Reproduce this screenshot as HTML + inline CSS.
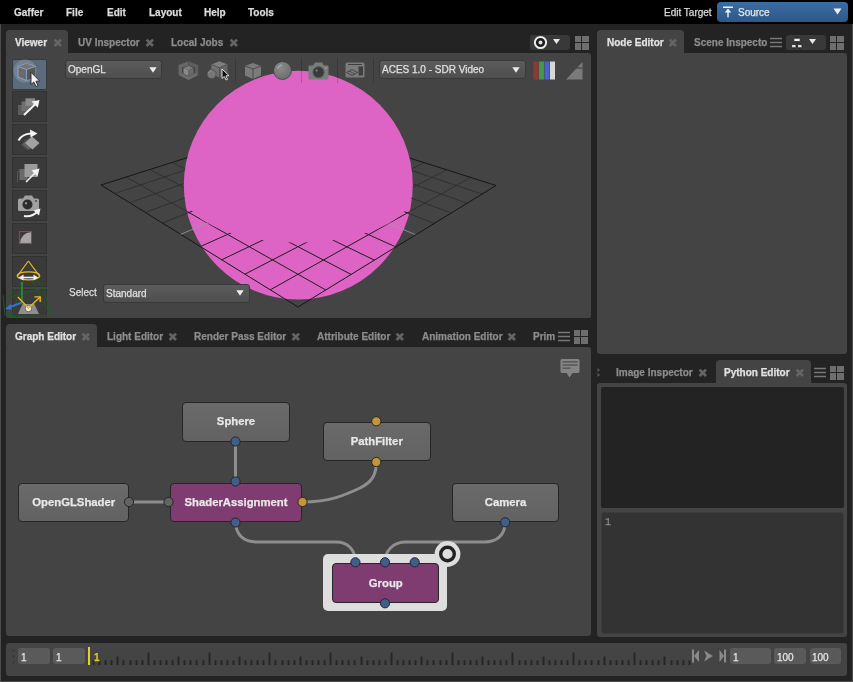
<!DOCTYPE html><html><head><meta charset="utf-8"><style>
*{margin:0;padding:0;box-sizing:border-box}
html,body{width:853px;height:682px;overflow:hidden;background:#232323;font-family:"Liberation Sans",sans-serif;}
.abs{position:absolute}
.t{position:absolute;white-space:nowrap;font-size:10px;line-height:12px;will-change:transform;-webkit-text-stroke:0.25px currentColor}
.b{font-weight:bold}
.menu{color:#dcdcdc;font-weight:bold}
.panel{position:absolute;background:#444444;border-radius:3px}
.tab{position:absolute;background:#444444;border-radius:4px 4px 0 0}
.tabt{color:#8c8c8c;font-weight:bold}
.act{color:#e2e2e2}
.dd{position:absolute;border-radius:3px;background:linear-gradient(#5c5c5c,#4e4e4e);border:1px solid #393939}
.btn{position:absolute;background:#383838;border:1px solid #2e2e2e;border-radius:2px}
.fld{position:absolute;background:#5a5a5a;border-radius:3px}
.node{position:absolute;border:1px solid #262626;border-radius:4px;color:#e8e8e8;font-weight:bold;font-size:11.3px;text-align:center}
</style></head><body>
<div class="abs" style="left:0;top:0;width:853px;height:682px;background:#232323"></div>
<div class="abs" style="left:0;top:24px;width:1.2px;height:658px;background:#4c4c4c"></div>
<div class="abs" style="left:851.7px;top:24px;width:1.3px;height:658px;background:#4c4c4c"></div>
<div class="abs" style="left:0;top:680.6px;width:853px;height:1.4px;background:#4c4c4c"></div>
<div class="abs" style="left:0;top:0;width:853px;height:24px;background:#000"></div>
<div class="t menu" style="left:14px;top:7px">Gaffer</div>
<div class="t menu" style="left:66px;top:7px">File</div>
<div class="t menu" style="left:106.5px;top:7px">Edit</div>
<div class="t menu" style="left:148.5px;top:7px">Layout</div>
<div class="t menu" style="left:204px;top:7px">Help</div>
<div class="t menu" style="left:248px;top:7px">Tools</div>
<div class="t" style="left:664px;top:7px;color:#dcdcdc">Edit Target</div>
<div class="abs" style="left:717px;top:2px;width:131px;height:20px;border-radius:4px;background:linear-gradient(#3b6ca2,#2c5889)"></div>
<svg class="abs" style="left:721.5px;top:5px" width="12" height="13" viewBox="0 0 12 13"><rect x="1" y="1.5" width="10" height="1.5" fill="#f2f2f2"/><path d="M6 3.4 L9.2 7.4 H2.8Z" fill="#f2f2f2"/><rect x="5.3" y="7" width="1.4" height="5.3" fill="#f2f2f2"/></svg>
<div class="t" style="left:738px;top:7px;color:#e6e6e6">Source</div>
<svg class="abs" style="left:833px;top:8px" width="9" height="7"><path d="M0.5 0.5H8.5L4.5 6.5Z" fill="#f0f0f0"/></svg>
<div class="tab" style="left:6px;top:30px;width:62px;height:24px"></div>
<div class="t tabt act" style="left:15px;top:37px">Viewer</div><svg class="abs" style="left:52.7px;top:37.7px" width="10" height="10" viewBox="0 0 10 10"><path d="M1.6 1.6L8 8M8 1.6L1.6 8" stroke="#656565" stroke-width="2.7"/></svg>
<div class="t tabt" style="left:78px;top:37px">UV Inspector</div><svg class="abs" style="left:145.2px;top:37.7px" width="10" height="10" viewBox="0 0 10 10"><path d="M1.6 1.6L8 8M8 1.6L1.6 8" stroke="#656565" stroke-width="2.7"/></svg>
<div class="t tabt" style="left:171px;top:37px">Local Jobs</div><svg class="abs" style="left:228.7px;top:37.7px" width="10" height="10" viewBox="0 0 10 10"><path d="M1.6 1.6L8 8M8 1.6L1.6 8" stroke="#656565" stroke-width="2.7"/></svg>
<div class="abs" style="left:530px;top:35px;width:40px;height:15px;background:#393939;border-radius:3px"></div>
<svg class="abs" style="left:533px;top:35px" width="15" height="15"><circle cx="7.5" cy="7.5" r="6" fill="#1c1c1c"/><circle cx="7.5" cy="7.5" r="5.6" stroke="#ececec" stroke-width="2" fill="none"/><circle cx="7.5" cy="7.5" r="2" fill="#e0e0e0"/></svg>
<svg class="abs" style="left:552.5px;top:39px" width="7" height="5"><path d="M0 0H7L3.5 5Z" fill="#e8e8e8"/></svg>
<svg class="abs" style="left:575px;top:36px" width="14" height="14" viewBox="0 0 14 14"><rect x="0" y="0" width="6" height="6" fill="#6e6e6e"/><rect x="7" y="0" width="7" height="6" fill="#6e6e6e"/><rect x="0" y="7" width="6" height="7" fill="#6e6e6e"/><rect x="7" y="7" width="7" height="7" fill="#6e6e6e"/></svg>
<div class="panel" style="left:6px;top:53px;width:585px;height:264.6px;border-radius:3px 3px 2px 2px"></div>
<svg class="abs" style="left:0;top:0" width="853" height="682"><defs><clipPath id="below"><rect x="0" y="0" width="853" height="682"/></clipPath></defs><line x1="101.00" y1="185.00" x2="298.00" y2="122.50" stroke="#161616" stroke-width="1.0"/><line x1="101.00" y1="185.00" x2="298.00" y2="307.00" stroke="#161616" stroke-width="1.0"/><line x1="114.81" y1="193.55" x2="313.34" y2="127.38" stroke="#2c2c2c" stroke-width="0.8"/><line x1="126.14" y1="177.02" x2="325.74" y2="289.98" stroke="#2c2c2c" stroke-width="0.8"/><line x1="129.57" y1="202.69" x2="329.47" y2="132.51" stroke="#2c2c2c" stroke-width="0.8"/><line x1="149.78" y1="169.52" x2="351.12" y2="274.41" stroke="#2c2c2c" stroke-width="0.8"/><line x1="145.38" y1="212.48" x2="346.44" y2="137.91" stroke="#2c2c2c" stroke-width="0.8"/><line x1="172.06" y1="162.46" x2="374.41" y2="260.11" stroke="#2c2c2c" stroke-width="0.8"/><line x1="162.36" y1="223.00" x2="364.34" y2="143.61" stroke="#2c2c2c" stroke-width="0.8"/><line x1="193.08" y1="155.79" x2="395.88" y2="246.94" stroke="#2c2c2c" stroke-width="0.8"/><line x1="180.63" y1="234.32" x2="383.23" y2="149.62" stroke="#9a9a9a" stroke-width="0.8"/><line x1="212.96" y1="149.48" x2="415.72" y2="234.76" stroke="#9a9a9a" stroke-width="0.8"/><line x1="200.37" y1="246.54" x2="403.20" y2="155.97" stroke="#2c2c2c" stroke-width="0.8"/><line x1="231.77" y1="143.51" x2="434.12" y2="223.47" stroke="#2c2c2c" stroke-width="0.8"/><line x1="221.74" y1="259.77" x2="424.35" y2="162.70" stroke="#2c2c2c" stroke-width="0.8"/><line x1="249.62" y1="137.85" x2="451.22" y2="212.98" stroke="#2c2c2c" stroke-width="0.8"/><line x1="244.96" y1="274.15" x2="446.78" y2="169.84" stroke="#2c2c2c" stroke-width="0.8"/><line x1="266.56" y1="132.47" x2="467.16" y2="203.20" stroke="#2c2c2c" stroke-width="0.8"/><line x1="270.28" y1="289.83" x2="470.62" y2="177.43" stroke="#2c2c2c" stroke-width="0.8"/><line x1="282.67" y1="127.36" x2="482.05" y2="194.06" stroke="#2c2c2c" stroke-width="0.8"/><line x1="298.00" y1="307.00" x2="496.00" y2="185.50" stroke="#161616" stroke-width="1.0"/><line x1="298.00" y1="122.50" x2="496.00" y2="185.50" stroke="#161616" stroke-width="1.0"/><ellipse cx="298.3" cy="185.1" rx="114.5" ry="114.3" fill="#dd64c4"/><mask id="front" maskUnits="userSpaceOnUse" x="0" y="0" width="853" height="682"><rect x="0" y="196" width="600" height="150" fill="#fff"/><path d="M388.69 223.39 L394.97 219.49 L400.25 215.40 L404.52 211.17 L407.79 206.86 L410.07 202.50 L411.38 198.13 L411.76 193.80 L411.24 189.55 L409.88 185.39 L407.72 181.36 L404.82 177.49 L401.23 173.78 L396.99 170.27 L392.18 166.95 L386.83 163.86 L381.00 160.98 L374.74 158.34 L368.10 155.94 L361.12 153.78 L353.85 151.87 L346.32 150.21 L338.59 148.80 L330.67 147.65 L322.62 146.75 L314.47 146.10 L306.25 145.71 L298.00 145.58 L289.75 145.70 L281.54 146.08 L273.39 146.71 L265.35 147.60 L257.46 148.74 L249.73 150.13 L242.23 151.78 L234.98 153.68 L228.02 155.82 L221.41 158.20 L215.17 160.83 L209.37 163.68 L204.05 166.76 L199.26 170.05 L195.05 173.55 L191.47 177.24 L188.58 181.10 L186.44 185.11 L185.08 189.25 L184.57 193.49 L184.95 197.81 L186.25 202.16 L188.52 206.52 L191.77 210.83 L196.02 215.06 L201.27 219.16 L207.52 223.08 L214.72 226.76 L222.84 230.16 L231.82 233.23 L241.57 235.93 L251.99 238.20 L262.98 240.01 L274.40 241.34 L286.12 242.15 L298.00 242.44 L309.88 242.20 L321.61 241.43 L333.05 240.15 L344.06 238.38 L354.52 236.14 L364.29 233.48 L373.30 230.44 L381.46 227.06 L388.69 223.39Z" fill="#000"/></mask><clipPath id="sil"><ellipse cx="298.3" cy="185.1" rx="114.5" ry="114.3"/></clipPath><g clip-path="url(#sil)"><g mask="url(#front)"><line x1="101.00" y1="185.00" x2="298.00" y2="122.50" stroke="#161616" stroke-width="1.0"/><line x1="101.00" y1="185.00" x2="298.00" y2="307.00" stroke="#161616" stroke-width="1.0"/><line x1="114.81" y1="193.55" x2="313.34" y2="127.38" stroke="#1e1e1e" stroke-width="1.0"/><line x1="126.14" y1="177.02" x2="325.74" y2="289.98" stroke="#1e1e1e" stroke-width="1.0"/><line x1="129.57" y1="202.69" x2="329.47" y2="132.51" stroke="#1e1e1e" stroke-width="1.0"/><line x1="149.78" y1="169.52" x2="351.12" y2="274.41" stroke="#1e1e1e" stroke-width="1.0"/><line x1="145.38" y1="212.48" x2="346.44" y2="137.91" stroke="#1e1e1e" stroke-width="1.0"/><line x1="172.06" y1="162.46" x2="374.41" y2="260.11" stroke="#1e1e1e" stroke-width="1.0"/><line x1="162.36" y1="223.00" x2="364.34" y2="143.61" stroke="#1e1e1e" stroke-width="1.0"/><line x1="193.08" y1="155.79" x2="395.88" y2="246.94" stroke="#1e1e1e" stroke-width="1.0"/><line x1="180.63" y1="234.32" x2="383.23" y2="149.62" stroke="#9a9a9a" stroke-width="1.0"/><line x1="212.96" y1="149.48" x2="415.72" y2="234.76" stroke="#9a9a9a" stroke-width="1.0"/><line x1="200.37" y1="246.54" x2="403.20" y2="155.97" stroke="#1e1e1e" stroke-width="1.0"/><line x1="231.77" y1="143.51" x2="434.12" y2="223.47" stroke="#1e1e1e" stroke-width="1.0"/><line x1="221.74" y1="259.77" x2="424.35" y2="162.70" stroke="#1e1e1e" stroke-width="1.0"/><line x1="249.62" y1="137.85" x2="451.22" y2="212.98" stroke="#1e1e1e" stroke-width="1.0"/><line x1="244.96" y1="274.15" x2="446.78" y2="169.84" stroke="#1e1e1e" stroke-width="1.0"/><line x1="266.56" y1="132.47" x2="467.16" y2="203.20" stroke="#1e1e1e" stroke-width="1.0"/><line x1="270.28" y1="289.83" x2="470.62" y2="177.43" stroke="#1e1e1e" stroke-width="1.0"/><line x1="282.67" y1="127.36" x2="482.05" y2="194.06" stroke="#1e1e1e" stroke-width="1.0"/><line x1="298.00" y1="307.00" x2="496.00" y2="185.50" stroke="#161616" stroke-width="1.0"/><line x1="298.00" y1="122.50" x2="496.00" y2="185.50" stroke="#161616" stroke-width="1.0"/></g></g></svg>
<div class="dd" style="left:65px;top:60px;width:97px;height:19px"></div>
<div class="t" style="left:68px;top:64px;color:#e0e0e0">OpenGL</div>
<svg class="abs" style="left:148.5px;top:66.5px" width="8" height="6"><path d="M0.3 0.3H7.7L4 5.8Z" fill="#ececec"/></svg>
<div class="dd" style="left:379px;top:60px;width:147px;height:19px"></div>
<div class="t" style="left:382px;top:64px;color:#e0e0e0">ACES 1.0 - SDR Video</div>
<svg class="abs" style="left:512px;top:67px" width="8" height="6"><path d="M0.3 0.3H7.7L4 5.8Z" fill="#ececec"/></svg>
<div class="abs" style="left:235px;top:58px;width:1px;height:24.5px;background:rgba(0,0,0,0.16)"></div>
<div class="abs" style="left:300.5px;top:58px;width:1px;height:24.5px;background:rgba(0,0,0,0.16)"></div>
<div class="abs" style="left:336.5px;top:58px;width:1px;height:24.5px;background:rgba(0,0,0,0.16)"></div>
<div class="abs" style="left:372.5px;top:58px;width:1px;height:24.5px;background:rgba(0,0,0,0.16)"></div>
<svg class="abs" style="left:178px;top:61px" width="22" height="20" viewBox="0 0 22 20">
<path d="M10.5 0.5 L20.3 4 V14 L10.5 19 L0.7 14 V4 Z M10.5 4.2 L4 6.6 V12.2 L10.5 15.6 L17 12.2 V6.6Z" fill="#5e5e5e" fill-rule="evenodd"/>
<path d="M0.7 4 L10.5 0.5 V4.2 L4 6.6 V12.2 L0.7 14Z" fill="#666"/>
<path d="M0.7 14 L4 12.2 L10.5 15.6 L17 12.2 L20.3 14 L10.5 19Z" fill="#6c6c6c"/>
<path d="M10.5 0.5V4.2" stroke="#4a4a4a" stroke-width="0.8"/>
<path d="M10.5 4.8 L15.5 7 L10.5 9.2 L5.5 7Z" fill="#7c7c7c"/>
<path d="M5.5 7 L10.5 9.2 V15 L5.5 12.5Z" fill="#8a8a8a"/>
<path d="M10.5 9.2 L15.5 7 V12.5 L10.5 15Z" fill="#6a6a6a"/>
</svg>
<svg class="abs" style="left:206px;top:61px" width="24" height="20" viewBox="0 0 24 20">
<path d="M13.4 0.3 L21.5 3.5 L13.4 6.8 L5.3 3.5Z" fill="#7e7e7e"/>
<path d="M5.3 3.5 L13.4 6.8 V16.4 L5.3 13.1Z" fill="#727272"/>
<path d="M13.4 6.8 L21.5 3.5 V13.1 L13.4 16.4Z" fill="#666"/>
<path d="M5.3 3.5 L13.4 6.8 L21.5 3.5 M13.4 6.8 V16.4" stroke="#4c4c4c" stroke-width="0.8" fill="none"/>
<circle cx="5.6" cy="13.2" r="4.6" fill="#777" stroke="#444" stroke-width="0.8"/>
<path d="M2.6 12 Q3.2 9.6 5.6 9.2" stroke="#999" stroke-width="0.8" fill="none"/>
</svg>
<svg class="abs" style="left:221px;top:68px" width="9" height="13" viewBox="0 0 9 13"><path d="M1 1 V10.5 L3.3 8.5 L5 12 L6.5 11.3 L4.9 7.9 L8 7.7Z" fill="#111" stroke="#eee" stroke-width="0.9"/></svg>
<svg class="abs" style="left:244px;top:62px" width="18" height="18" viewBox="0 0 18 18">
<path d="M9 1 L17 4 V13.5 L9 17 L1 13.5 V4Z" fill="#7b7b7b"/>
<path d="M1 4 L9 7 L17 4 M9 7V17" stroke="#4a4a4a" stroke-width="1" fill="none"/>
</svg>
<svg class="abs" style="left:273px;top:61px" width="19" height="19" viewBox="0 0 19 19">
<defs><radialGradient id="sg" cx="0.4" cy="0.35" r="0.7"><stop offset="0" stop-color="#8a8a8a"/><stop offset="1" stop-color="#6c6c6c"/></radialGradient></defs>
<circle cx="9.5" cy="9.5" r="9" fill="url(#sg)" stroke="#3d3d3d" stroke-width="0.8"/>
<path d="M4.5 8 Q5.5 4.5 9 3.8" stroke="#a8a8a8" stroke-width="1.2" fill="none"/>
</svg>
<svg class="abs" style="left:307px;top:62px" width="23" height="18" viewBox="0 0 23 18">
<path d="M1.5 4.5 Q1.5 3.5 2.5 3.5 H6 L8 0.5 H15 L17 3.5 H20.5 Q21.5 3.5 21.5 4.5 V16.5 Q21.5 17.5 20.5 17.5 H2.5 Q1.5 17.5 1.5 16.5Z" fill="#7b7b7b"/>
<circle cx="11.5" cy="10.2" r="5.6" fill="#3a3a3a" stroke="#5a5a5a" stroke-width="0.8"/>
<circle cx="9.6" cy="8.4" r="1" fill="#8a8a8a"/>
<circle cx="18.8" cy="6.2" r="0.9" fill="#a0a0a0"/>
</svg>
<svg class="abs" style="left:345px;top:62px" width="20" height="16" viewBox="0 0 20 16">
<rect x="0.5" y="0.5" width="19" height="15" rx="1.5" fill="#7b7b7b"/>
<path d="M3 2.5 H17" stroke="#3e3e3e" stroke-width="1"/>
<path d="M1.5 10.5 L7 7.5 L12.5 10.5 L7 13.5Z" fill="none" stroke="#3e3e3e" stroke-width="0.9"/>
<path d="M4.2 9 L9.7 12" stroke="#3e3e3e" stroke-width="0.8"/>
<rect x="13.5" y="4.5" width="4.5" height="9" fill="#3e3e3e"/>
</svg>
<svg class="abs" style="left:533px;top:61px" width="24" height="19"><rect x="0.5" y="0.5" width="5" height="18" fill="#8c3a37"/><rect x="6" y="0.5" width="5" height="18" fill="#3e9a46"/><rect x="11.5" y="0.5" width="5" height="18" fill="#4b63c6"/><rect x="17" y="0.5" width="5" height="18" fill="#d6d6d6"/></svg>
<svg class="abs" style="left:566px;top:62px" width="17" height="18"><path d="M0 17.5 L16.5 17.5 L16.5 0Z" fill="#7a7a7a"/><path d="M10 6 L16.5 6" stroke="#444" stroke-width="1.2"/></svg>
<div class="t" style="left:68.5px;top:287px;color:#dedede">Select</div>
<div class="dd" style="left:103px;top:284px;width:147px;height:19px"></div>
<div class="t" style="left:106px;top:288px;color:#e0e0e0">Standard</div>
<svg class="abs" style="left:235.5px;top:290px" width="8" height="6"><path d="M0.3 0.3H7.7L4 5.8Z" fill="#ececec"/></svg>
<div class="abs" style="left:11.5px;top:58.5px;width:35px;height:31px;background:#5b6b7b;border:1px solid #353a40;border-radius:2px"></div>
<div class="abs" style="left:11.5px;top:91px;width:35.5px;height:31px;background:#3a3a3a;border:1px solid #323232"></div>
<div class="abs" style="left:11.5px;top:124px;width:35.5px;height:31px;background:#3a3a3a;border:1px solid #323232"></div>
<div class="abs" style="left:11.5px;top:157px;width:35.5px;height:31px;background:#3a3a3a;border:1px solid #323232"></div>
<div class="abs" style="left:11.5px;top:190px;width:35.5px;height:31px;background:#3a3a3a;border:1px solid #323232"></div>
<div class="abs" style="left:11.5px;top:223px;width:35.5px;height:31px;background:#3a3a3a;border:1px solid #323232"></div>
<div class="abs" style="left:11.5px;top:256px;width:35.5px;height:31px;background:#3a3a3a;border:1px solid #323232"></div>
<div class="abs" style="left:12px;top:289px;width:35px;height:28px;background:#3a3a3a;border:1px solid #333;border-bottom:none"></div>
<svg class="abs" style="left:12px;top:59px" width="34" height="30" viewBox="0 0 34 30">
<circle cx="13" cy="12" r="11.5" fill="#8795a3" opacity="0.55"/>
<path d="M6 7.5 L14.5 4.5 L23.5 7.5 V18 L14.5 21.5 L6 18Z" fill="#6e6868" stroke="#7fa8d8" stroke-width="1"/>
<path d="M14.5 10.5 L23.5 7.5 V18 L14.5 21.5Z" fill="#585555"/>
<path d="M6.5 7.7 L14.5 4.8 L23 7.7 L14.5 10.3Z" fill="#7a7272"/>
<path d="M6 7.5 L14.5 10.5 L23.5 7.5 M14.5 10.5 V21.5" stroke="#7fa8d8" stroke-width="0.9" fill="none"/>
<path d="M19 13.3 V25.5 L21.8 23 L24 27.5 L26 26.6 L23.9 22.3 L27.7 22Z" fill="#f4f4f4" stroke="#222" stroke-width="0.9"/>
</svg>
<svg class="abs" style="left:12px;top:91px" width="35" height="31" viewBox="0 0 35 31">
<rect x="6" y="14" width="8" height="10" fill="#5c5c5c"/>
<rect x="9.5" y="10.5" width="9" height="9.5" fill="#707070"/>
<rect x="13.5" y="7.3" width="9.5" height="7.5" fill="#8a8a8a"/>
<path d="M12 24 L25.5 11" stroke="#f4f4f4" stroke-width="2"/>
<path d="M27.5 9 L19.5 10.5 L25.8 16.8Z" fill="#f4f4f4"/>
</svg>
<svg class="abs" style="left:12px;top:124px" width="35" height="31" viewBox="0 0 35 31">
<path d="M9 21 L14 15 L20 20 L15 26Z" fill="#505050"/>
<path d="M11 20.5 L17 14 L23 19.5 L17 26Z" fill="#636363"/>
<path d="M13 19 L20 12.5 L27.5 19 L20.5 25.5Z" fill="#a2a2a2"/>
<path d="M6.5 16.5 Q10 10 19 9.5" stroke="#f4f4f4" stroke-width="2" fill="none"/>
<path d="M18 5.5 L25.5 9.5 L18.5 13.5Z" fill="#f4f4f4"/>
</svg>
<svg class="abs" style="left:12px;top:157px" width="35" height="31" viewBox="0 0 35 31">
<path d="M5.5 25 V14.5 H9" stroke="#555" stroke-width="1" fill="none"/>
<rect x="7.5" y="12" width="8" height="11" fill="#6a6a6a"/>
<rect x="12.5" y="7" width="13" height="13" fill="#9c9c9c"/>
<path d="M14 25 L25 14" stroke="#f4f4f4" stroke-width="1.6"/>
<path d="M27.5 11.5 L19.5 13.5 L25.5 19.5Z" fill="#f4f4f4"/>
</svg>
<svg class="abs" style="left:12px;top:190px" width="35" height="31" viewBox="0 0 35 31">
<path d="M6 10 Q6 8.5 7.5 8.5 H11 L13 5.5 H20 L22 8.5 H25.5 Q27 8.5 27 10 V19.5 Q27 21 25.5 21 H7.5 Q6 21 6 19.5Z" fill="#a0a0a0"/>
<circle cx="15.5" cy="14.5" r="5" fill="#2c2c2c"/>
<circle cx="14" cy="13.3" r="1.1" fill="#aaa"/>
<circle cx="24" cy="11" r="0.9" fill="#444"/>
<path d="M12 26 Q20 27.5 25.5 21.5" stroke="#f4f4f4" stroke-width="2" fill="none"/>
<path d="M28.5 18.5 L21.5 20.5 L27 25.5Z" fill="#f4f4f4"/>
</svg>
<svg class="abs" style="left:12px;top:223px" width="35" height="31" viewBox="0 0 35 31">
<path d="M8 20.5 Q8.5 10 19.5 9 V20.5Z" fill="#a6a6a6"/>
<rect x="7.5" y="8.5" width="12" height="12" fill="none" stroke="#c13232" stroke-width="1.1"/>
</svg>
<svg class="abs" style="left:0px;top:255px" width="60" height="64" viewBox="0 0 60 64">
<g stroke="#1d5e22" stroke-width="0.9" fill="none">
<path d="M22.6 26 L7.5 43 L8 61.5 L50.7 60.5 L43.7 33 L36 25"/>
<path d="M31.4 25.4 L50.7 60.5 M9.7 42 L43.7 33 M22.6 26 L12 61"/>
<path d="M3 40 L5 61"/>
</g>
<path d="M22 27 V47" stroke="#2f8f35" stroke-width="1.6"/>
<path d="M22 47.5 L10 52" stroke="#3d6ec8" stroke-width="2.2"/>
<path d="M5 54 L10.5 49 L12 54.5Z" fill="#3d6ec8"/>
<path d="M22.6 48.9 H34.3 L39 58.9 H17.9Z" fill="#8e8e8e"/>
<circle cx="28.4" cy="53.6" r="3.2" fill="#e8e8e8" stroke="#555" stroke-width="0.8"/>
<path d="M17.9 41.9 L28.4 53 L40.2 41.9" stroke="#e8b820" stroke-width="1.4" fill="none"/>
<path d="M34.3 41.9 H40.2 V47" stroke="#e8b820" stroke-width="1.4" fill="none"/>
<path d="M28.4 6 L17.5 20.8 M28.4 6 L39.4 20.8" stroke="#e8b820" stroke-width="1.2" fill="none"/>
<ellipse cx="28.5" cy="20.8" rx="11.2" ry="4" stroke="#e8b820" stroke-width="1.3" fill="none"/>
<path d="M22 22.5 H35" stroke="#f0f0f0" stroke-width="1.6"/>
<path d="M18.8 22.5 L23.5 19.5 V25.5Z M38.2 22.5 L33.5 19.5 V25.5Z" fill="#f0f0f0"/>
</svg>
<div class="tab" style="left:597px;top:30px;width:87px;height:24px"></div>
<div class="t tabt act" style="left:606.5px;top:37px">Node Editor</div><svg class="abs" style="left:667.7px;top:37.7px" width="10" height="10" viewBox="0 0 10 10"><path d="M1.6 1.6L8 8M8 1.6L1.6 8" stroke="#656565" stroke-width="2.7"/></svg>
<div class="t tabt" style="left:694px;top:37px">Scene Inspecto</div>
<svg class="abs" style="left:770px;top:37px" width="12" height="11" viewBox="0 0 12 11"><path d="M0 1.5H12M0 5.5H12M0 9.5H12" stroke="#777" stroke-width="1.4"/></svg>
<div class="abs" style="left:786px;top:35px;width:40px;height:15px;background:#393939;border-radius:3px"></div>
<svg class="abs" style="left:790.5px;top:36px" width="12" height="13" viewBox="0 0 12 13"><path d="M6 0.5V2M6 5.5V8M2.7 8V8.5M8.7 8V8.5M2.7 12V12.8M8.7 12V12.8" stroke="#222" stroke-width="1"/><rect x="2.8" y="2.2" width="6.4" height="3.4" rx="0.6" fill="#f0f0f0" stroke="#1a1a1a" stroke-width="0.8"/><rect x="0.6" y="8.4" width="4.4" height="3.4" rx="0.6" fill="#e0e0e0" stroke="#1a1a1a" stroke-width="0.8"/><rect x="6.6" y="8.4" width="4.4" height="3.4" rx="0.6" fill="#e0e0e0" stroke="#1a1a1a" stroke-width="0.8"/></svg>
<svg class="abs" style="left:808.5px;top:39px" width="7" height="5"><path d="M0 0H7L3.5 5Z" fill="#e8e8e8"/></svg>
<svg class="abs" style="left:830px;top:36px" width="14" height="14" viewBox="0 0 14 14"><rect x="0" y="0" width="6" height="6" fill="#6e6e6e"/><rect x="7" y="0" width="7" height="6" fill="#6e6e6e"/><rect x="0" y="7" width="6" height="7" fill="#6e6e6e"/><rect x="7" y="7" width="7" height="7" fill="#6e6e6e"/></svg>
<div class="panel" style="left:597px;top:53px;width:250px;height:300.5px"></div>
<div class="tab" style="left:6px;top:324px;width:91px;height:24px"></div>
<div class="t tabt act" style="left:15px;top:331px">Graph Editor</div><svg class="abs" style="left:81.2px;top:331.7px" width="10" height="10" viewBox="0 0 10 10"><path d="M1.6 1.6L8 8M8 1.6L1.6 8" stroke="#656565" stroke-width="2.7"/></svg>
<div class="t tabt" style="left:107px;top:331px">Light Editor</div><svg class="abs" style="left:168.2px;top:331.7px" width="10" height="10" viewBox="0 0 10 10"><path d="M1.6 1.6L8 8M8 1.6L1.6 8" stroke="#656565" stroke-width="2.7"/></svg>
<div class="t tabt" style="left:194px;top:331px">Render Pass Editor</div><svg class="abs" style="left:291.2px;top:331.7px" width="10" height="10" viewBox="0 0 10 10"><path d="M1.6 1.6L8 8M8 1.6L1.6 8" stroke="#656565" stroke-width="2.7"/></svg>
<div class="t tabt" style="left:317px;top:331px">Attribute Editor</div><svg class="abs" style="left:395.2px;top:331.7px" width="10" height="10" viewBox="0 0 10 10"><path d="M1.6 1.6L8 8M8 1.6L1.6 8" stroke="#656565" stroke-width="2.7"/></svg>
<div class="t tabt" style="left:421.5px;top:331px">Animation Editor</div><svg class="abs" style="left:506.7px;top:331.7px" width="10" height="10" viewBox="0 0 10 10"><path d="M1.6 1.6L8 8M8 1.6L1.6 8" stroke="#656565" stroke-width="2.7"/></svg>
<div class="t tabt" style="left:533px;top:331px">Prim</div>
<svg class="abs" style="left:558px;top:331px" width="12" height="11" viewBox="0 0 12 11"><path d="M0 1.5H12M0 5.5H12M0 9.5H12" stroke="#777" stroke-width="1.4"/></svg>
<svg class="abs" style="left:574px;top:330px" width="14" height="14" viewBox="0 0 14 14"><rect x="0" y="0" width="6" height="6" fill="#6e6e6e"/><rect x="7" y="0" width="7" height="6" fill="#6e6e6e"/><rect x="0" y="7" width="6" height="7" fill="#6e6e6e"/><rect x="7" y="7" width="7" height="7" fill="#6e6e6e"/></svg>
<div class="panel" style="left:6px;top:347px;width:585px;height:289px"></div>
<svg class="abs" style="left:559px;top:358px" width="22" height="21" viewBox="0 0 22 21">
<path d="M3 1 H19 Q20.5 1 20.5 2.5 V13.5 Q20.5 15 19 15 H13.5 L10.5 19.5 L7.5 15 H3 Q1.5 15 1.5 13.5 V2.5 Q1.5 1 3 1Z" fill="#858585"/>
<rect x="3.5" y="3" width="15" height="1.6" fill="#5a5a5a"/><rect x="3.5" y="6.2" width="15" height="1.6" fill="#5a5a5a"/><rect x="3.5" y="9.4" width="8" height="1.6" fill="#5a5a5a"/>
</svg>
<svg class="abs" style="left:0;top:0" width="853" height="682"><path d="M235.5 442 V481" stroke="#8e8e8e" stroke-width="3" fill="none"/><path d="M129 502 H168.5" stroke="#8e8e8e" stroke-width="3" fill="none"/><path d="M302.5 502 C330 502 345 495 360 488 C372 482 376.3 475 376.3 462" stroke="#8e8e8e" stroke-width="3" fill="none"/><path d="M235.5 522.5 C236 535 244 542 256 542 H336 C348 542 355.4 550 355.4 562" stroke="#8e8e8e" stroke-width="3" fill="none"/><path d="M505.2 522.5 C505 535 497 542 485 542 H406 C394 542 385 550 385 562" stroke="#8e8e8e" stroke-width="3" fill="none"/></svg>
<div class="abs" style="left:323px;top:554px;width:124px;height:57px;background:#dedede;border-radius:5px"></div>
<svg class="abs" style="left:434px;top:541px" width="27" height="27"><circle cx="13.5" cy="13" r="12.9" fill="#dedede"/><circle cx="13.5" cy="13" r="6.8" fill="none" stroke="#222" stroke-width="3.4"/></svg>
<div class="node" style="left:182px;top:401.5px;width:108px;height:40.0px;background:linear-gradient(#6a6a6a,#626262)"></div>
<div class="t" style="left:182px;width:108px;top:415px;text-align:center;font-weight:bold;font-size:11.3px;color:#e8e8e8">Sphere</div>
<div class="node" style="left:17.5px;top:482.5px;width:111.5px;height:39.0px;background:linear-gradient(#6a6a6a,#626262)"></div>
<div class="t" style="left:17.5px;width:111.5px;top:496px;text-align:center;font-weight:bold;font-size:11.3px;color:#e8e8e8">OpenGLShader</div>
<div class="node" style="left:169.5px;top:482.5px;width:132.0px;height:39.0px;background:#7e3c70"></div>
<div class="t" style="left:169.5px;width:132.0px;top:496px;text-align:center;font-weight:bold;font-size:11.3px;color:#e8e8e8">ShaderAssignment</div>
<div class="node" style="left:323px;top:421.5px;width:107.5px;height:39.5px;background:linear-gradient(#6a6a6a,#626262)"></div>
<div class="t" style="left:323px;width:107.5px;top:435px;text-align:center;font-weight:bold;font-size:11.3px;color:#e8e8e8">PathFilter</div>
<div class="node" style="left:451.5px;top:482.5px;width:107.0px;height:39.0px;background:linear-gradient(#6a6a6a,#626262)"></div>
<div class="t" style="left:451.5px;width:107.0px;top:496px;text-align:center;font-weight:bold;font-size:11.3px;color:#e8e8e8">Camera</div>
<div class="node" style="left:331.5px;top:562.5px;width:107.5px;height:40.0px;background:#7e3c70"></div>
<div class="t" style="left:331.5px;width:107.5px;top:576.5px;text-align:center;font-weight:bold;font-size:11.3px;color:#e8e8e8">Group</div>
<svg class="abs" style="left:0;top:0" width="853" height="682"><circle cx="235.5" cy="441.5" r="4.6" fill="#3f5e8c" stroke="#262626" stroke-width="1"/><circle cx="235.5" cy="481.5" r="4.6" fill="#3f5e8c" stroke="#262626" stroke-width="1"/><circle cx="235.5" cy="522.5" r="4.6" fill="#3f5e8c" stroke="#262626" stroke-width="1"/><circle cx="129" cy="502" r="4.6" fill="#636363" stroke="#262626" stroke-width="1"/><circle cx="168.5" cy="502" r="4.6" fill="#636363" stroke="#262626" stroke-width="1"/><circle cx="302.5" cy="502" r="4.6" fill="#c39638" stroke="#262626" stroke-width="1"/><circle cx="376.3" cy="421.3" r="4.6" fill="#c39638" stroke="#262626" stroke-width="1"/><circle cx="376.3" cy="462" r="4.6" fill="#c39638" stroke="#262626" stroke-width="1"/><circle cx="505.2" cy="522.3" r="4.6" fill="#3f5e8c" stroke="#262626" stroke-width="1"/><circle cx="355.4" cy="562.3" r="4.6" fill="#3f5e8c" stroke="#262626" stroke-width="1"/><circle cx="385" cy="562.3" r="4.6" fill="#3f5e8c" stroke="#262626" stroke-width="1"/><circle cx="414.7" cy="562.3" r="4.6" fill="#3f5e8c" stroke="#262626" stroke-width="1"/><circle cx="385" cy="603.3" r="4.6" fill="#3f5e8c" stroke="#262626" stroke-width="1"/></svg>
<svg class="abs" style="left:596.5px;top:367px" width="5" height="11"><path d="M0.5 1 L3 3 L0.5 5Z M0.5 6 L3 8 L0.5 10Z" fill="#5e5e5e"/></svg>
<div class="t tabt" style="left:616px;top:367px">Image Inspector</div><svg class="abs" style="left:697.7px;top:367.7px" width="10" height="10" viewBox="0 0 10 10"><path d="M1.6 1.6L8 8M8 1.6L1.6 8" stroke="#656565" stroke-width="2.7"/></svg>
<div class="tab" style="left:715.5px;top:360px;width:95px;height:24px"></div>
<div class="t tabt act" style="left:724px;top:367px">Python Editor</div><svg class="abs" style="left:795.2px;top:367.7px" width="10" height="10" viewBox="0 0 10 10"><path d="M1.6 1.6L8 8M8 1.6L1.6 8" stroke="#656565" stroke-width="2.7"/></svg>
<svg class="abs" style="left:814px;top:367px" width="12" height="11" viewBox="0 0 12 11"><path d="M0 1.5H12M0 5.5H12M0 9.5H12" stroke="#777" stroke-width="1.4"/></svg>
<svg class="abs" style="left:830px;top:366px" width="14" height="14" viewBox="0 0 14 14"><rect x="0" y="0" width="6" height="6" fill="#6e6e6e"/><rect x="7" y="0" width="7" height="6" fill="#6e6e6e"/><rect x="0" y="7" width="6" height="7" fill="#6e6e6e"/><rect x="7" y="7" width="7" height="7" fill="#6e6e6e"/></svg>
<div class="panel" style="left:597px;top:383px;width:250px;height:253.5px"></div>
<div class="abs" style="left:600.5px;top:386.5px;width:243px;height:121px;background:#232323;border-radius:2px"></div>
<div class="abs" style="left:600.5px;top:512px;width:243px;height:122px;background:#333333;border:1px solid #3c3c3c;border-radius:3px"></div>
<div class="t" style="left:604.5px;top:517px;font-family:'Liberation Mono',monospace;color:#8a8a8a;font-size:10px">1</div>
<div class="panel" style="left:6px;top:642.5px;width:841px;height:33.5px"></div>
<svg class="abs" style="left:11px;top:648px" width="6" height="18"><circle cx="2.5" cy="2.5" r="1.3" fill="#3a3a3a"/><circle cx="2.5" cy="8.5" r="1.3" fill="#3a3a3a"/><circle cx="2.5" cy="14.5" r="1.3" fill="#3a3a3a"/></svg>
<div class="fld" style="left:18.3px;top:647.5px;width:31.999999999999996px;height:16.5px"></div>
<div class="t" style="left:20.8px;top:651.5px;color:#e6e6e6">1</div>
<div class="fld" style="left:53.3px;top:647.5px;width:32.0px;height:16.5px"></div>
<div class="t" style="left:55.8px;top:651.5px;color:#e6e6e6">1</div>
<div class="fld" style="left:730.3px;top:647.5px;width:40.700000000000045px;height:16.5px"></div>
<div class="t" style="left:732.8px;top:651.5px;color:#e6e6e6">1</div>
<div class="fld" style="left:774.4px;top:647.5px;width:31.399999999999977px;height:16.5px"></div>
<div class="t" style="left:776.9px;top:651.5px;color:#e6e6e6">100</div>
<div class="fld" style="left:809.5px;top:647.5px;width:31.799999999999955px;height:16.5px"></div>
<div class="t" style="left:812.0px;top:651.5px;color:#e6e6e6">100</div>
<svg class="abs" style="left:0;top:0" width="853" height="682"><path d="M93.5 660.3V665" stroke="#262626" stroke-width="2"/><path d="M99.5 660.3V665" stroke="#262626" stroke-width="2"/><path d="M105.5 660.3V665" stroke="#262626" stroke-width="2"/><path d="M111.5 660.3V665" stroke="#262626" stroke-width="2"/><path d="M117.5 656.5V665" stroke="#262626" stroke-width="2"/><path d="M123.5 660.3V665" stroke="#262626" stroke-width="2"/><path d="M130.5 660.3V665" stroke="#262626" stroke-width="2"/><path d="M136.5 660.3V665" stroke="#262626" stroke-width="2"/><path d="M142.5 660.3V665" stroke="#262626" stroke-width="2"/><path d="M148.5 652.5V665" stroke="#262626" stroke-width="2"/><path d="M154.5 660.3V665" stroke="#262626" stroke-width="2"/><path d="M160.5 660.3V665" stroke="#262626" stroke-width="2"/><path d="M166.5 660.3V665" stroke="#262626" stroke-width="2"/><path d="M172.5 660.3V665" stroke="#262626" stroke-width="2"/><path d="M178.5 656.5V665" stroke="#262626" stroke-width="2"/><path d="M184.5 660.3V665" stroke="#262626" stroke-width="2"/><path d="M190.5 660.3V665" stroke="#262626" stroke-width="2"/><path d="M196.5 660.3V665" stroke="#262626" stroke-width="2"/><path d="M203.5 660.3V665" stroke="#262626" stroke-width="2"/><path d="M209.5 652.5V665" stroke="#262626" stroke-width="2"/><path d="M215.5 660.3V665" stroke="#262626" stroke-width="2"/><path d="M221.5 660.3V665" stroke="#262626" stroke-width="2"/><path d="M227.5 660.3V665" stroke="#262626" stroke-width="2"/><path d="M233.5 660.3V665" stroke="#262626" stroke-width="2"/><path d="M239.5 656.5V665" stroke="#262626" stroke-width="2"/><path d="M245.5 660.3V665" stroke="#262626" stroke-width="2"/><path d="M251.5 660.3V665" stroke="#262626" stroke-width="2"/><path d="M257.5 660.3V665" stroke="#262626" stroke-width="2"/><path d="M263.5 660.3V665" stroke="#262626" stroke-width="2"/><path d="M269.5 652.5V665" stroke="#262626" stroke-width="2"/><path d="M275.5 660.3V665" stroke="#262626" stroke-width="2"/><path d="M282.5 660.3V665" stroke="#262626" stroke-width="2"/><path d="M288.5 660.3V665" stroke="#262626" stroke-width="2"/><path d="M294.5 660.3V665" stroke="#262626" stroke-width="2"/><path d="M300.5 656.5V665" stroke="#262626" stroke-width="2"/><path d="M306.5 660.3V665" stroke="#262626" stroke-width="2"/><path d="M312.5 660.3V665" stroke="#262626" stroke-width="2"/><path d="M318.5 660.3V665" stroke="#262626" stroke-width="2"/><path d="M324.5 660.3V665" stroke="#262626" stroke-width="2"/><path d="M330.5 652.5V665" stroke="#262626" stroke-width="2"/><path d="M336.5 660.3V665" stroke="#262626" stroke-width="2"/><path d="M342.5 660.3V665" stroke="#262626" stroke-width="2"/><path d="M348.5 660.3V665" stroke="#262626" stroke-width="2"/><path d="M354.5 660.3V665" stroke="#262626" stroke-width="2"/><path d="M361.5 656.5V665" stroke="#262626" stroke-width="2"/><path d="M367.5 660.3V665" stroke="#262626" stroke-width="2"/><path d="M373.5 660.3V665" stroke="#262626" stroke-width="2"/><path d="M379.5 660.3V665" stroke="#262626" stroke-width="2"/><path d="M385.5 660.3V665" stroke="#262626" stroke-width="2"/><path d="M391.5 652.5V665" stroke="#262626" stroke-width="2"/><path d="M397.5 660.3V665" stroke="#262626" stroke-width="2"/><path d="M403.5 660.3V665" stroke="#262626" stroke-width="2"/><path d="M409.5 660.3V665" stroke="#262626" stroke-width="2"/><path d="M415.5 660.3V665" stroke="#262626" stroke-width="2"/><path d="M421.5 656.5V665" stroke="#262626" stroke-width="2"/><path d="M427.5 660.3V665" stroke="#262626" stroke-width="2"/><path d="M433.5 660.3V665" stroke="#262626" stroke-width="2"/><path d="M440.5 660.3V665" stroke="#262626" stroke-width="2"/><path d="M446.5 660.3V665" stroke="#262626" stroke-width="2"/><path d="M452.5 652.5V665" stroke="#262626" stroke-width="2"/><path d="M458.5 660.3V665" stroke="#262626" stroke-width="2"/><path d="M464.5 660.3V665" stroke="#262626" stroke-width="2"/><path d="M470.5 660.3V665" stroke="#262626" stroke-width="2"/><path d="M476.5 660.3V665" stroke="#262626" stroke-width="2"/><path d="M482.5 656.5V665" stroke="#262626" stroke-width="2"/><path d="M488.5 660.3V665" stroke="#262626" stroke-width="2"/><path d="M494.5 660.3V665" stroke="#262626" stroke-width="2"/><path d="M500.5 660.3V665" stroke="#262626" stroke-width="2"/><path d="M506.5 660.3V665" stroke="#262626" stroke-width="2"/><path d="M512.5 652.5V665" stroke="#262626" stroke-width="2"/><path d="M519.5 660.3V665" stroke="#262626" stroke-width="2"/><path d="M525.5 660.3V665" stroke="#262626" stroke-width="2"/><path d="M531.5 660.3V665" stroke="#262626" stroke-width="2"/><path d="M537.5 660.3V665" stroke="#262626" stroke-width="2"/><path d="M543.5 656.5V665" stroke="#262626" stroke-width="2"/><path d="M549.5 660.3V665" stroke="#262626" stroke-width="2"/><path d="M555.5 660.3V665" stroke="#262626" stroke-width="2"/><path d="M561.5 660.3V665" stroke="#262626" stroke-width="2"/><path d="M567.5 660.3V665" stroke="#262626" stroke-width="2"/><path d="M573.5 652.5V665" stroke="#262626" stroke-width="2"/><path d="M579.5 660.3V665" stroke="#262626" stroke-width="2"/><path d="M585.5 660.3V665" stroke="#262626" stroke-width="2"/><path d="M591.5 660.3V665" stroke="#262626" stroke-width="2"/><path d="M598.5 660.3V665" stroke="#262626" stroke-width="2"/><path d="M604.5 656.5V665" stroke="#262626" stroke-width="2"/><path d="M610.5 660.3V665" stroke="#262626" stroke-width="2"/><path d="M616.5 660.3V665" stroke="#262626" stroke-width="2"/><path d="M622.5 660.3V665" stroke="#262626" stroke-width="2"/><path d="M628.5 660.3V665" stroke="#262626" stroke-width="2"/><path d="M634.5 652.5V665" stroke="#262626" stroke-width="2"/><path d="M640.5 660.3V665" stroke="#262626" stroke-width="2"/><path d="M646.5 660.3V665" stroke="#262626" stroke-width="2"/><path d="M652.5 660.3V665" stroke="#262626" stroke-width="2"/><path d="M658.5 660.3V665" stroke="#262626" stroke-width="2"/><path d="M664.5 656.5V665" stroke="#262626" stroke-width="2"/><path d="M671.5 660.3V665" stroke="#262626" stroke-width="2"/><path d="M677.5 660.3V665" stroke="#262626" stroke-width="2"/><path d="M683.5 660.3V665" stroke="#262626" stroke-width="2"/><path d="M689.5 660.3V665" stroke="#262626" stroke-width="2"/><rect x="88" y="647" width="2" height="18" fill="#e6d320"/></svg>
<div class="t b" style="left:94px;top:652px;color:#d8c42a;font-size:10px">1</div>
<svg class="abs" style="left:692px;top:649px" width="36" height="14" viewBox="0 0 36 14"><path d="M1 0.5V13.5" stroke="#8a8a8a" stroke-width="2"/><path d="M7 1 L2 7 L7 13Z" fill="#8a8a8a"/><path d="M12 1.5 L21 7 L12 12.5 L14.5 7Z" fill="#8a8a8a"/><path d="M33 0.5V13.5" stroke="#8a8a8a" stroke-width="2"/><path d="M27.5 1 L32 7 L27.5 13Z" fill="#8a8a8a"/></svg>
</body></html>
